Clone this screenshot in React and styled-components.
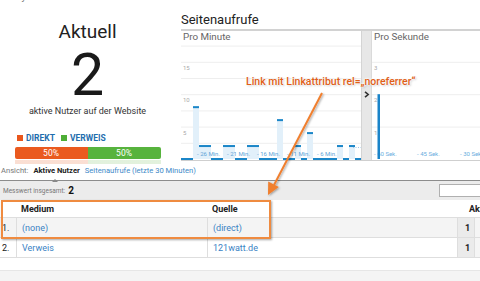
import React from 'react'
import styled, { createGlobalStyle } from 'styled-components'

const GlobalStyle = createGlobalStyle`
	body {
		margin: 0;
		background: #fff;
		font-family: Roboto, "Liberation Sans", sans-serif;
	}
`

const Page = styled.div`
	position: relative;
	width: 480px;
	height: 281px;
	overflow: hidden;
	background: #fff;
	color: #222;
`

const Keywords = styled.div`
	height: 12px;
	margin-top: -9px;
	padding-left: 2px;
	font-size: 10px;
	line-height: 12px;
	color: #777;
`

const Main = styled.div`
	display: flex;
	height: 158px;
`

/* left: realtime counter */
const Counter = styled.div`
	width: 175px;
	display: flex;
	flex-direction: column;
	align-items: center;
`

const CounterTitle = styled.div`
	margin-top: 18px;
	font-size: 19px;
	line-height: 22px;
	color: #222;
`

const CounterValue = styled.div`
	margin-top: 2px;
	font-size: 59px;
	line-height: 60px;
	font-weight: 400;
	color: #1a1a1a;
`

const CounterLabel = styled.div`
	font-size: 9px;
	line-height: 12px;
	color: #333;
`

const Legend = styled.div`
	display: flex;
	align-self: flex-start;
	margin: 16px 0 0 17px;
	gap: 6px;
	height: 10px;
`

const LegendItem = styled.div`
	display: flex;
	align-items: center;
	gap: 3px;
	font-size: 8.5px;
	line-height: 10px;
	font-weight: 700;
	color: #1f6eae;

	&::before {
		content: '';
		width: 6px;
		height: 6px;
		background: ${p => p.color};
	}
`

const Split = styled.div`
	position: relative;
	display: flex;
	width: 146px;
	height: 12px;
	margin-top: 4px;
	border-radius: 2px;

	&::after {
		content: '';
		position: absolute;
		left: 0;
		right: 0;
		top: 13px;
		height: 4px;
		background: linear-gradient(to right, #f7c9b5 50%, #cfe8c6 50%);
		opacity: 0.6;
	}
`

const SplitPart = styled.div`
	flex: 1;
	display: flex;
	align-items: center;
	justify-content: center;
	background: ${p => p.color};
	color: #fff;
	font-size: 8.5px;
	border-radius: ${p => (p.first ? '2px 0 0 2px' : '0 2px 2px 0')};
`

/* right: page views chart */
const Views = styled.div`
	flex: 1;
	margin-left: 6px;
	display: flex;
	flex-direction: column;
`

const ViewsTitle = styled.div`
	margin-top: 9px;
	font-size: 13px;
	line-height: 16px;
	color: #222;
`

const ChartBox = styled.div`
	margin-top: 1px;
	display: flex;
	border-top: 2px solid #d2d2d2;
	border-bottom: 1px solid #cfcfcf;
`

const Pane = styled.div`
	width: ${p => p.width};
	flex: ${p => (p.width ? 'none' : '1')};
	display: flex;
	flex-direction: column;
`

const PaneTitle = styled.div`
	height: 14px;
	padding-left: 2px;
	font-size: 9.8px;
	line-height: 12px;
	color: #666;
`

const Splitter = styled.div`
	width: 9px;
	background: #e7e7e7;
	border-left: 1px solid #d4d4d4;
	border-right: 1px solid #dadada;
	display: flex;
	justify-content: center;
	padding-top: 60px;
`

/* tabs line */
const ViewRow = styled.div`
	display: flex;
	align-items: center;
	gap: 5px;
	height: 19px;
	padding-left: 1px;
	font-size: 7.6px;
	color: #777;
`

const ActiveTab = styled.span`
	position: relative;
	font-weight: 700;
	color: #222;

	&::after {
		content: '';
		position: absolute;
		left: 19px;
		top: 10px;
		border: 3px solid transparent;
		border-bottom-color: #888;
	}
`

const TabLink = styled.span`
	color: #3d8ac8;
`

const Toolbar = styled.div`
	display: flex;
	align-items: center;
	height: 19px;
	padding-left: 3px;
	background: #ececec;
	border-top: 1px solid #8c8c8c;
	font-size: 6.5px;
	color: #777;
`

const Total = styled.b`
	margin-left: 3px;
	font-size: 10px;
	color: #111;
`

const Search = styled.div`
	margin-left: auto;
	width: 40px;
	height: 11px;
	background: #fff;
	border: 1px solid #b0b0b0;
	border-right: none;
`

const Row = styled.div`
	display: grid;
	grid-template-columns: 16px 191px 250px 17px 1fr;
	height: ${p => (p.head ? '18px' : '20px')};
	border-bottom: 1px solid #dedede;
	background: ${p => (p.shade ? '#f4f4f4' : '#fff')};
	font-size: 9px;
	box-sizing: border-box;
`

const Cell = styled.div`
	display: flex;
	align-items: center;
	padding-left: ${p => p.pad || '5px'};
	border-left: ${p => (p.line ? '1px solid #dedede' : 'none')};
	font-weight: ${p => (p.bold ? 700 : 400)};
	color: ${p => (p.link ? '#3a82c4' : '#222')};
	background: ${p => p.bg || 'transparent'};
	white-space: nowrap;
	overflow: hidden;
`

const HeadCell = styled(Cell)`
	grid-column: ${p => p.span || 'auto'};
`

const Spacer = styled.div`
	height: 12px;
	border-bottom: 1px solid #e6e6e6;
`

const Footer = styled.div`
	height: 12px;
	background: #f4f4f4;
`

/* annotation drawn over the screenshot */
const Note = styled.div`
	position: absolute;
	left: 246px;
	top: 75px;
	font-size: 10.5px;
	line-height: 13px;
	font-weight: 500;
	color: #e05f18;
	white-space: nowrap;
	text-shadow: 0 0 2px #fff, 0 0 2px #fff, 0 0 3px #fff, 1px 1px 2px rgba(0, 0, 0, 0.25);
`

const Highlight = styled.div`
	position: absolute;
	left: 1px;
	top: 200px;
	width: 270px;
	height: 39px;
	box-sizing: border-box;
	border: 2px solid #ef8b40;
	box-shadow: 1px 1px 2px rgba(0, 0, 0, 0.35);
`

const Overlay = styled.svg`
	position: absolute;
	left: 0;
	top: 0;
	pointer-events: none;
`

const minutes = [0, 0, 8, 2, 2, 0, 0, 2, 2, 0, 0, 2, 2, 0, 0, 0, 6, 0, 0, 2, 0, 4, 0, 0, 0, 0, 2, 0, 2, 0]
const minLabels = ['- 26 Min.', '- 21 Min.', '- 16 Min.', '- 11 Min.', '- 6 Min.']
const BASE = 114

const MinuteChart = () => {
	const unit = 6.48
	return (
		<svg width="180" height="115">
			{[17.5, 15, 12.5, 10, 7.5, 5, 2.5].map(v => (
				<line key={v} x1="0" x2="180" y1={BASE - v * unit + 0.5} y2={BASE - v * unit + 0.5} stroke="#eeeeee" />
			))}
			{[15, 10, 5].map(v => (
				<text key={v} x="2" y={BASE - v * unit + 8} fontSize="6" fill="#aaa">{v}</text>
			))}
			{minutes.map((v, i) => {
				const top = BASE - v * unit
				return (
					<g key={i}>
						{v > 0 && <rect x={i * 6} y={top} width="6" height={BASE - top} fill="#e2f0fa" />}
						<rect x={i * 6} y={top - 1} width="6" height="2" fill="#1b86c8" />
					</g>
				)
			})}
			{minLabels.map((t, i) => (
				<text key={t} x={16 + i * 30} y="111" fontSize="6" fill="#5fa3d6">{t}</text>
			))}
			<line x1="172" x2="180" y1="102.5" y2="102.5" stroke="#9cc8e8" strokeDasharray="1 1.5" />
		</svg>
	)
}

const SecondChart = () => {
	const unit = 32.4
	return (
		<svg width="108" height="115">
			{[3, 2, 1].map(v => (
				<g key={v}>
					<line x1="0" x2="108" y1={BASE - v * unit + 0.5} y2={BASE - v * unit + 0.5} stroke="#eeeeee" />
					<text x="2" y={BASE - v * unit + 8} fontSize="6" fill="#aaa">{v}</text>
				</g>
			))}
			{['- 60 Sek.', '- 45 Sek.', '- 30 Sek.'].map((t, i) => (
				<text key={t} x={2 + i * 43} y="111" fontSize="6" fill="#6aaede">{t}</text>
			))}
			<rect x="5.5" y={BASE - 2 * unit} width="2.5" height={2 * unit} fill="#1a84c9" />
		</svg>
	)
}

const rows = [
	{ n: '1.', medium: '(none)', source: '(direct)', value: 1 },
	{ n: '2.', medium: 'Verweis', source: '121watt.de', value: 1 },
]

const App = () => (
	<Page>
		<GlobalStyle />
		<Keywords>0 Keywords</Keywords>
		<Main>
			<Counter>
				<CounterTitle>Aktuell</CounterTitle>
				<CounterValue>2</CounterValue>
				<CounterLabel>aktive Nutzer auf der Website</CounterLabel>
				<Legend>
					<LegendItem color="#e9561c">DIREKT</LegendItem>
					<LegendItem color="#4eae36">VERWEIS</LegendItem>
				</Legend>
				<Split>
					<SplitPart first color="#ea5a1f">50%</SplitPart>
					<SplitPart color="#57b33d">50%</SplitPart>
				</Split>
			</Counter>
			<Views>
				<ViewsTitle>Seitenaufrufe</ViewsTitle>
				<ChartBox>
					<Pane width="180px">
						<PaneTitle>Pro Minute</PaneTitle>
						<MinuteChart />
					</Pane>
					<Splitter>
						<svg width="6" height="7" viewBox="0 0 6 7">
							<path d="M1 0.8 L4.2 3.5 L1 6.2" fill="none" stroke="#333" strokeWidth="1.6" />
						</svg>
					</Splitter>
					<Pane>
						<PaneTitle>Pro Sekunde</PaneTitle>
						<SecondChart />
					</Pane>
				</ChartBox>
			</Views>
		</Main>
		<ViewRow>
			<span>Ansicht:</span>
			<ActiveTab>Aktive Nutzer</ActiveTab>
			<TabLink>Seitenaufrufe (letzte 30 Minuten)</TabLink>
		</ViewRow>
		<Toolbar>
			Messwert insgesamt: <Total>2</Total>
			<Search />
		</Toolbar>
		<Row head>
			<HeadCell />
			<HeadCell bold>Medium</HeadCell>
			<HeadCell bold>Quelle</HeadCell>
			<HeadCell bold span="4 / 6" pad="12px">Aktive Nutzer</HeadCell>
		</Row>
		{rows.map((r, i) => (
			<Row key={r.n} shade={i === 0}>
				<Cell pad="2px">{r.n}</Cell>
				<Cell line link>{r.medium}</Cell>
				<Cell line link>{r.source}</Cell>
				<Cell line bold pad="7px" bg="#ebebeb">{r.value}</Cell>
				<Cell line bg="#f5f5f5" />
			</Row>
		))}
		<Spacer />
		<Footer />

		<Note>Link mit Linkattribut rel=„noreferrer“</Note>
		<Highlight />
		<Overlay width="480" height="281">
			<defs>
				<filter id="shade" x="-20%" y="-20%" width="140%" height="140%">
					<feDropShadow dx="1" dy="1" stdDeviation="1" floodColor="#000" floodOpacity="0.35" />
				</filter>
			</defs>
			<g filter="url(#shade)">
				<line x1="322" y1="93" x2="274" y2="185" stroke="#f07f2e" strokeWidth="2" />
				<polygon points="268,195 268.2,181.6 278.8,187.1" fill="#f07f2e" />
			</g>
		</Overlay>
	</Page>
)

export default App
